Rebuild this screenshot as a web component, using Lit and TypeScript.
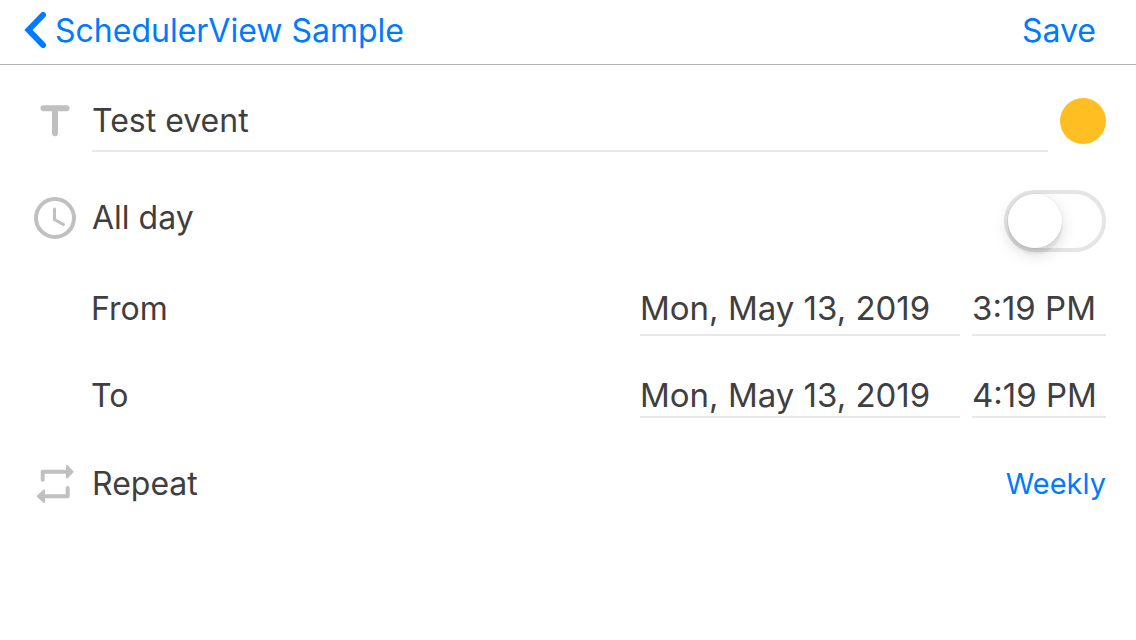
import { LitElement, html, css } from "lit";
import { customElement, state } from "lit/decorators.js";

@customElement("app-root")
export class AppRoot extends LitElement {
  static styles = css`
    :host {
      display: block;
      min-height: 100vh;
      background: #fff;
      color: #3f3f41;
      font: 32px/40px Inter, "Liberation Sans", sans-serif;
    }
    * { box-sizing: border-box; }
    header {
      display: flex;
      align-items: center;
      justify-content: space-between;
      height: 65px;
      padding: 0 40px 2px 24px;
      border-bottom: 1px solid #b2b2b2;
    }
    a, button { color: #007aff; text-decoration: none; }
    button, input { font: inherit; border: 0; padding: 0; margin: 0; background: none; border-radius: 0; }
    input { color: inherit; min-width: 0; outline: 0; }
    .back { display: flex; align-items: center; gap: 7px; }
    svg { display: block; }
    form { padding: 25px 30px 0 34px; }
    .row { display: grid; grid-template-columns: 42px 1fr auto; column-gap: 16px; align-items: center; }
    .icon { justify-self: center; }
    .title { height: 62px; }
    .title-box { display: flex; align-items: center; height: 62px; padding-top: 2px; margin-right: -4px; border-bottom: 2px solid #e8e8e8; }
    .title-box input { width: 100%; }
    .swatch { width: 46px; height: 46px; border-radius: 50%; background: #ffbf22; }
    .allday { height: 68px; margin-top: 32px; }
    .toggle {
      appearance: none;
      align-self: end;
      width: 102px;
      height: 62px;
      border: 4px solid #e5e5e5;
      border-radius: 31px;
      display: flex;
    }
    .toggle::before {
      content: "";
      flex: none;
      width: 54px;
      height: 54px;
      border-radius: 50%;
      background: #fff;
      box-shadow: 0 6px 16px rgba(0,0,0,.15), 0 6px 2px rgba(0,0,0,.06), 0 0 0 1px rgba(0,0,0,.04);
    }
    .toggle:checked { border-color: #4cd964; background: #4cd964; }
    .toggle:checked::before { margin-left: auto; }
    .time { display: flex; justify-content: space-between; align-items: center; padding-left: 57px; }
    .from { height: 54px; margin-top: 30px; }
    .to { height: 44px; margin-top: 38px; }
    .fields { display: flex; align-self: stretch; gap: 12px; font-size: 33px; }
    .fields input { border-bottom: 2px solid #e8e8e8; }
    .date { width: 320px; }
    .clock { width: 134px; }
    .repeat { height: 60px; margin-top: 36px; }
    .weekly { font-size: 29px; }
  `;

  @state() private allDay = false;

  render() {
    return html`
      <header>
        <a class="back" href="#">
          <svg width="24" height="38" viewBox="0 0 24 38" fill="none" stroke="currentColor" stroke-width="6" stroke-linecap="round" stroke-linejoin="miter"><path d="M19 3 4.500 18 19 33"/></svg>
          SchedulerView Sample
        </a>
        <button type="submit" form="event">Save</button>
      </header>
      <form id="event" @submit=${(e: Event) => e.preventDefault()}>
        <div class="row title">
          <svg class="icon" width="30" height="32" viewBox="0 0 30 32" fill="none" stroke="#c0c0c2" stroke-width="6" stroke-linecap="round"><path d="M3.500 3.300h23M15 4v24.300"/></svg>
          <div class="title-box"><input aria-label="Title" value="Test event" /></div>
          <button class="swatch" type="button" aria-label="Event color"></button>
        </div>
        <div class="row allday">
          <svg class="icon" width="42" height="42" viewBox="0 0 42 42" fill="none" stroke="#c0c0c2" stroke-width="4"><circle cx="21" cy="21" r="19"/><path d="M20.500 12v10.500l9 5" stroke-width="3" stroke-linecap="round"/></svg>
          <label for="allday">All day</label>
          <input id="allday" class="toggle" type="checkbox" .checked=${this.allDay} @change=${() => (this.allDay = !this.allDay)} />
        </div>
        <div class="time from">
          <label for="from-date">From</label>
          <div class="fields">
            <input id="from-date" class="date" value="Mon, May 13, 2019" />
            <input class="clock" aria-label="From time" value="3:19 PM" />
          </div>
        </div>
        <div class="time to">
          <label for="to-date">To</label>
          <div class="fields">
            <input id="to-date" class="date" value="Mon, May 13, 2019" />
            <input class="clock" aria-label="To time" value="4:19 PM" />
          </div>
        </div>
        <div class="row repeat">
          <svg class="icon" width="38" height="40" viewBox="0 0 38 40" fill="#c0c0c2" stroke="#c0c0c2" stroke-linecap="round" stroke-linejoin="round">
            <path d="M6.700 15.700v-8H32M31.700 24v8.300H6" fill="none" stroke-width="4"/>
            <path d="M31 2v11.500l5.500-5.800zM8 26.500v11.500l-6.200-5.700z" stroke-width="2"/>
          </svg>
          <span>Repeat</span>
          <button class="weekly" type="button">Weekly</button>
        </div>
      </form>
    `;
  }
}
